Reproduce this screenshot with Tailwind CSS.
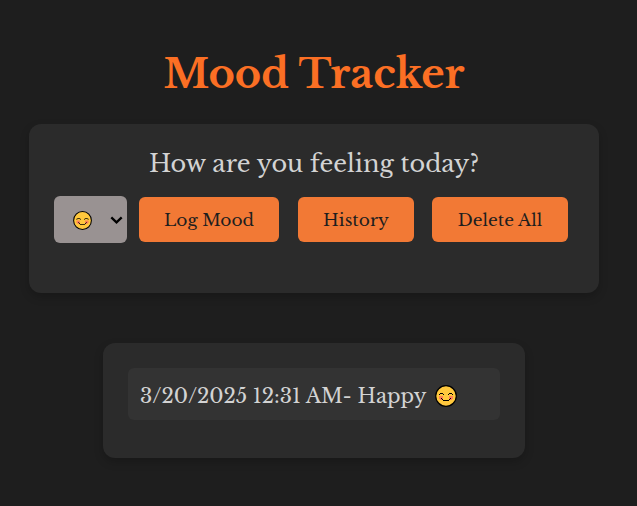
<!DOCTYPE html>
<html lang="en">
<head>
<meta charset="utf-8">
<title>Mood Tracker</title>
<script src="https://cdn.jsdelivr.net/npm/@tailwindcss/browser@4"></script>
</head>
<body class="h-[506px] overflow-hidden bg-[#1e1e1e] font-['Libre_Baskerville','Liberation_Serif',serif] text-[#d3d3d3]">
<svg class="hidden">
  <symbol id="smile" viewBox="0 0 22 22">
    <circle cx="11" cy="11" r="10.3" fill="#ffc83d" stroke="#000" stroke-width="1.2"/>
    <path d="M4 11h4v3H7v1H5v-1H4zM14 11h4v3h-1v1h-2v-1h-1z" fill="#ff8257"/>
    <path d="M4 9h1v1H4zM5 8h3v1H5zM8 9h1v1H8zM13 9h1v1h-1zM14 8h3v1h-3zM17 9h1v1h-1zM6 13h1v1H6zM7 14h1v1H7zM8 15h6v1H8zM14 14h1v1h-1zM15 13h1v1h-1z" fill="#000"/>
  </symbol>
</svg>
<main class="flex w-[628px] flex-col items-center">
  <h1 class="mt-[44px] h-[60px] text-[40px] leading-[60px] font-bold whitespace-nowrap text-[#fb6f24]">Mood Tracker</h1>
  <section class="mt-[20px] h-[169px] w-[570px] rounded-xl bg-[#2b2b2b] px-[25px] pt-[21px] shadow-[0_4px_10px_rgba(0,0,0,0.2)]">
    <h2 class="h-[38px] text-center text-2xl leading-[38px] tracking-[-0.03px] whitespace-nowrap">How are you feeling today?</h2>
    <div class="mt-[13px] flex items-center text-[17px] text-[#1e1e1e]">
      <button class="flex h-[47px] w-[73px] items-center justify-between rounded-md bg-[#999292] pr-[4px] pl-[19px]" aria-label="Mood">
        <svg class="mt-px size-[19px]"><use href="#smile"/></svg>
        <svg class="h-[8px] w-[13px]" viewBox="0 0 13 8" fill="none" stroke="#000" stroke-width="2.3"><path d="M1.3 1.3 6.5 6.3l5.2-5"/></svg>
      </button>
      <button class="ml-[12px] h-[45px] w-[140px] rounded-md bg-[#f27935] pt-[2px] whitespace-nowrap">Log Mood</button>
      <button class="ml-[19px] h-[45px] w-[116px] rounded-md bg-[#f27935] pt-[2px] whitespace-nowrap">History</button>
      <button class="ml-[18px] h-[45px] w-[136px] rounded-md bg-[#f27935] pt-[2px] whitespace-nowrap">Delete All</button>
    </div>
  </section>
  <section class="mt-[50px] h-[115px] w-[422px] rounded-xl bg-[#2b2b2b] p-[25px] shadow-[0_4px_10px_rgba(0,0,0,0.2)]">
    <div class="flex h-[52px] items-center rounded-md bg-[#333333] pl-[12px]">
      <span class="w-[295px] pt-[4px] text-xl leading-[36px] tracking-[-0.05px] whitespace-nowrap">3/20/2025 12:31 AM- Happy</span>
      <svg class="mt-[4px] size-[22px]"><use href="#smile"/></svg>
    </div>
  </section>
</main>
</body>
</html>
